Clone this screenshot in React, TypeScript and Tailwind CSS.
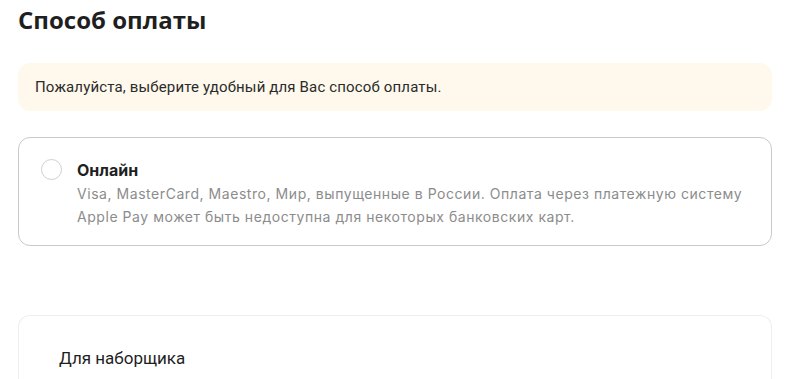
import React from 'react';

export default function App() {
  return (
    <div className="h-screen overflow-hidden bg-white pl-[18px] pr-[16px] pt-[3px]">
      {/* заголовок */}
      <h1
        className="text-[24px] leading-[34px] font-bold text-[#1f1f1f]"
        style={{ fontFamily: '"Open Sans", "Noto Sans", sans-serif' }}
      >
        Способ оплаты
      </h1>

      {/* подсказка */}
      <div
        className="mt-[26px] h-[48px] rounded-xl bg-[#fef9ec] flex items-center pl-[17px] text-[15px] tracking-[0.15px] text-[#2b2b2b]"
        style={{ fontFamily: 'Roboto, sans-serif' }}
      >
        Пожалуйста, выберите удобный для Вас способ оплаты.
      </div>

      {/* вариант оплаты */}
      <div
        className="mt-[26px] rounded-xl border border-[#c9c9c9] flex items-start pl-[22px] pr-6 pt-[21px] pb-[17px]"
        style={{ fontFamily: 'Inter, sans-serif' }}
      >
        <div className="w-[21px] h-[21px] rounded-full border border-[#cfcfcf] shrink-0" />
        <div className="ml-[15px]">
          <div className="text-[16px] leading-[22px] font-bold text-[#1f1f1f]">Онлайн</div>
          <p className="mt-[1px] text-[14px] leading-[23px] text-[#8c8c8c] tracking-[0.55px]">
            Visa, MasterCard, Maestro, Мир, выпущенные в России. Оплата через платежную систему
            <br />
            Apple Pay может быть недоступна для некоторых банковских карт.
          </p>
        </div>
      </div>

      {/* следующий блок */}
      <div
        className="mt-[69px] rounded-xl border border-[#eeeeee] border-b-0 pl-[40px] pt-[30px] pb-8 text-[17px] text-[#1f1f1f]"
        style={{ fontFamily: 'Roboto, sans-serif' }}
      >
        Для наборщика
      </div>
    </div>
  );
}
